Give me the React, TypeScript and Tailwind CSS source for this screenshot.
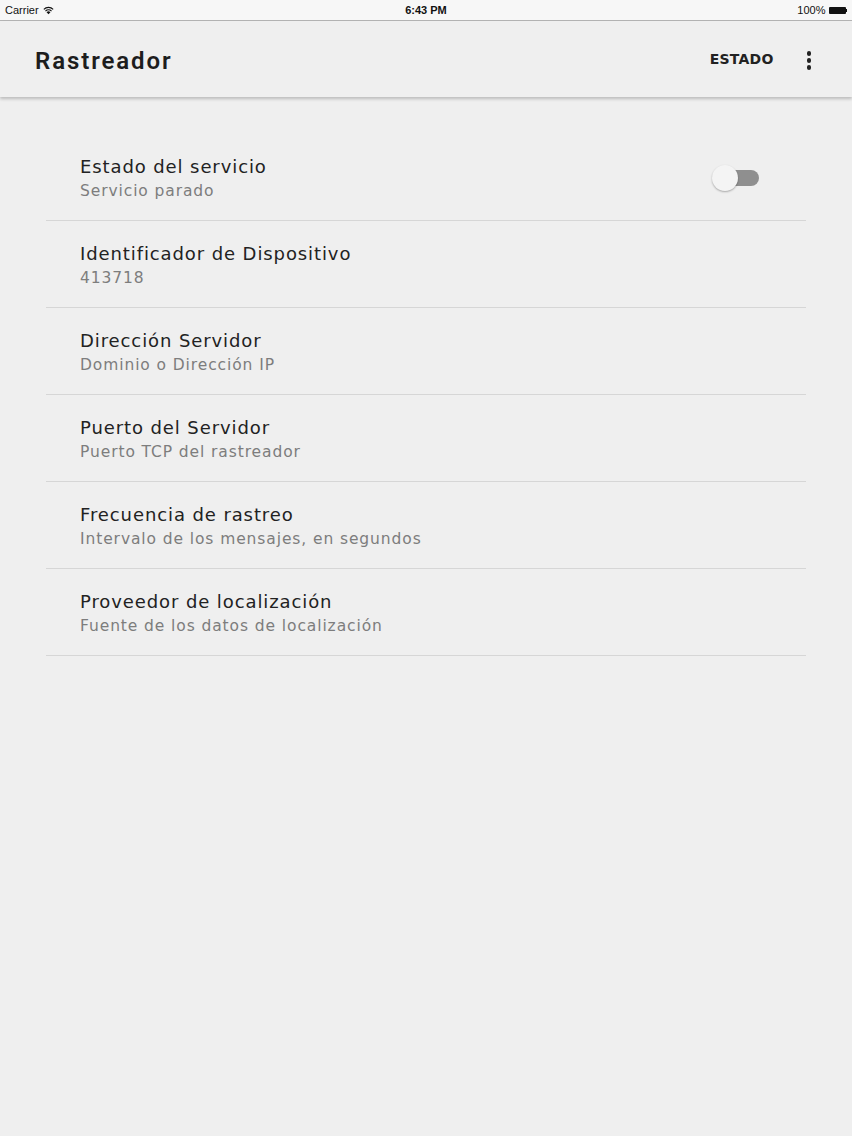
import { useState } from "react";

const settings = [
  { title: "Estado del servicio", sub: "Servicio parado", toggle: true },
  { title: "Identificador de Dispositivo", sub: "413718" },
  { title: "Dirección Servidor", sub: "Dominio o Dirección IP" },
  { title: "Puerto del Servidor", sub: "Puerto TCP del rastreador" },
  { title: "Frecuencia de rastreo", sub: "Intervalo de los mensajes, en segundos" },
  { title: "Proveedor de localización", sub: "Fuente de los datos de localización" },
];

function StatusBar() {
  return (
    <div className="h-[21px] bg-[#f7f7f7] border-b border-[#b5b5b5] flex items-center justify-between px-[5px] text-[11px] text-[#111] font-['Liberation_Sans',sans-serif] relative">
      <div className="flex items-center gap-[4px]">
        <span>Carrier</span>
        {/* wifi */}
        <svg width="11" height="9" viewBox="0 0 12 9">
          <path d="M6 8.6 L3.9 6.3 A3 3 0 0 1 8.1 6.3 Z" fill="#111" />
          <path d="M2.7 5.1 A4.7 4.7 0 0 1 9.3 5.1" stroke="#111" strokeWidth="1.3" fill="none" />
          <path d="M0.9 3.2 A7.2 7.2 0 0 1 11.1 3.2" stroke="#111" strokeWidth="1.3" fill="none" />
        </svg>
      </div>
      <span className="absolute left-1/2 -translate-x-1/2 font-bold text-[11px]">6:43 PM</span>
      <div className="flex items-center gap-[3px]">
        <span>100%</span>
        <div className="flex items-center">
          <div className="w-[17px] h-[7px] bg-[#111] rounded-[1px]" />
          <div className="w-[1.5px] h-[3px] bg-[#111]" />
        </div>
      </div>
    </div>
  );
}

function Toolbar() {
  return (
    <div className="h-[76px] bg-[#efefef] flex items-center pl-[35px] pr-[41px] shadow-[0_2px_3px_rgba(0,0,0,0.22)] relative z-10">
      <h1 className="flex-1 text-[24px] font-semibold text-[#1d1d1d] font-['Roboto',sans-serif] tracking-[1.9px] pt-[3px]">
        Rastreador
      </h1>
      <button className="text-[14px] font-bold text-[#222] font-['DejaVu_Sans',sans-serif] tracking-[0.2px] mr-[33px] pt-[1px]">
        ESTADO
      </button>
      <div className="flex flex-col gap-[2.5px] pt-[3px]">
        <span className="w-[4.5px] h-[4.5px] rounded-full bg-[#222]" />
        <span className="w-[4.5px] h-[4.5px] rounded-full bg-[#222]" />
        <span className="w-[4.5px] h-[4.5px] rounded-full bg-[#222]" />
      </div>
    </div>
  );
}

export default function App() {
  const [on, setOn] = useState(false);

  return (
    <div className="w-[852px] h-[1136px] bg-[#efefef] overflow-hidden">
      <StatusBar />
      <Toolbar />

      {/* Settings list */}
      <div className="mx-[46px] w-[760px] mt-[37px] font-['DejaVu_Sans',sans-serif]">
        {settings.map((s) => (
          <div key={s.title} className="h-[87px] border-b border-[#d6d6d6] flex items-center pl-[34px] pr-[47px]">
            <div className="flex-1 pt-[2px]">
              <div className="text-[18px] leading-[26px] text-[#222] tracking-[0.9px]">{s.title}</div>
              <div className="text-[15.5px] leading-[23px] text-[#7d7d7d] tracking-[0.9px]">{s.sub}</div>
            </div>
            {s.toggle && (
              <button onClick={() => setOn(!on)} className="relative w-[47px] h-[26px] mt-[2px]">
                <span className="absolute left-[10px] right-0 top-[5px] h-[16px] rounded-full bg-[#8f8f8f]" />
                <span className="absolute left-0 top-0 w-[26px] h-[26px] rounded-full bg-[#f4f4f4] shadow-[0_1px_2px_rgba(0,0,0,0.3)]" />
              </button>
            )}
          </div>
        ))}
      </div>
    </div>
  );
}
